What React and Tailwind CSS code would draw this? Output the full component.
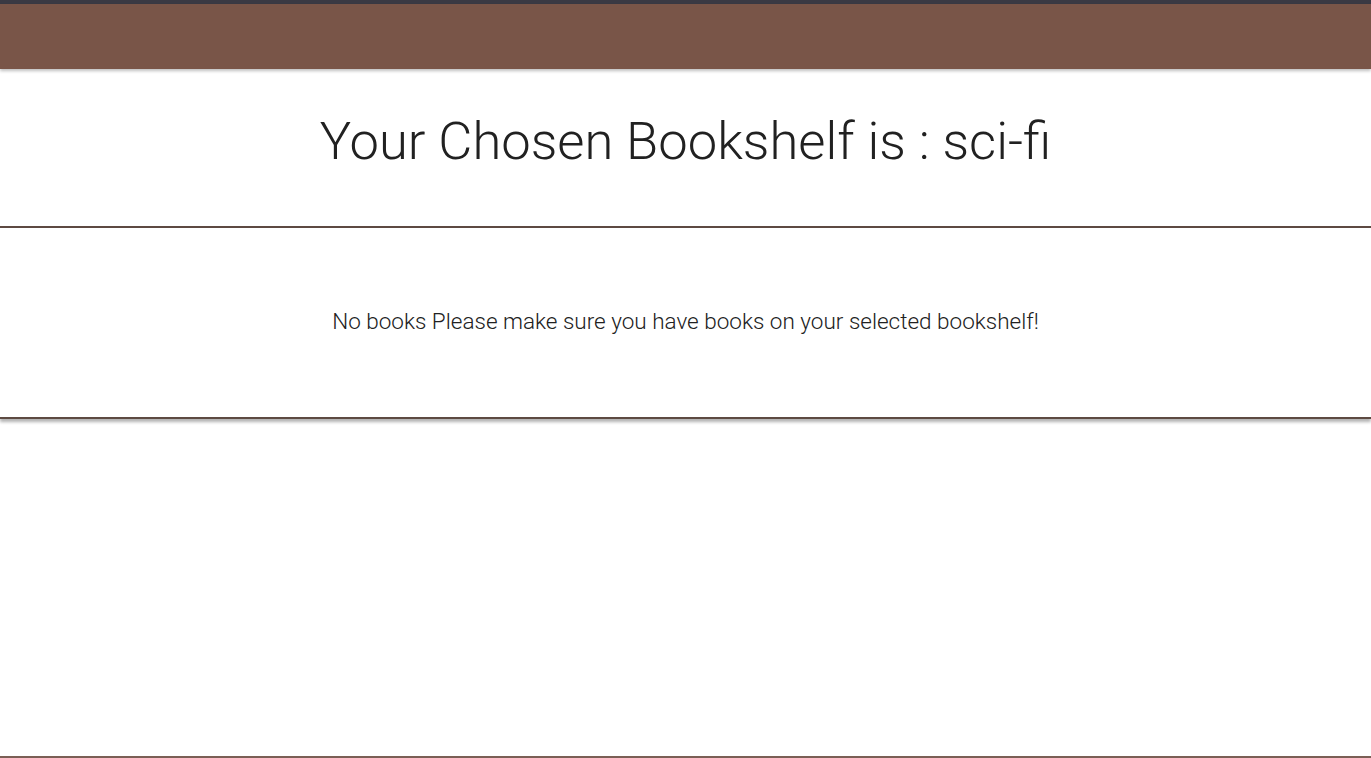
import React from "react";

const App = () => {
  const shelf = "sci-fi";
  return (
    <div className="min-h-[758px] flex flex-col bg-white font-['Roboto',sans-serif] font-light text-[#212121]">
      <div className="h-[4px] bg-[#3a3943]" />
      <nav className="h-[65px] bg-[#795548] shadow-[0_2px_3px_rgba(0,0,0,0.25)] relative z-10" />
      <div className="h-[159px] flex items-center justify-center border-b-2 border-[#5d4a42]">
        <h2 className="text-[52.5px] leading-none pb-[12px]">
          Your Chosen Bookshelf is : {shelf}
        </h2>
      </div>
      <div className="h-[191px] flex items-center justify-center border-b-2 border-[#5d4a42] shadow-[0_3px_3px_rgba(0,0,0,0.3)]">
        <p className="text-[22.5px] pb-[2px]">
          No books Please make sure you have books on your selected bookshelf!
        </p>
      </div>
      <div className="flex-1" />
      <div className="h-[2px] bg-[#7b5f55]" />
    </div>
  );
};

export default App;
